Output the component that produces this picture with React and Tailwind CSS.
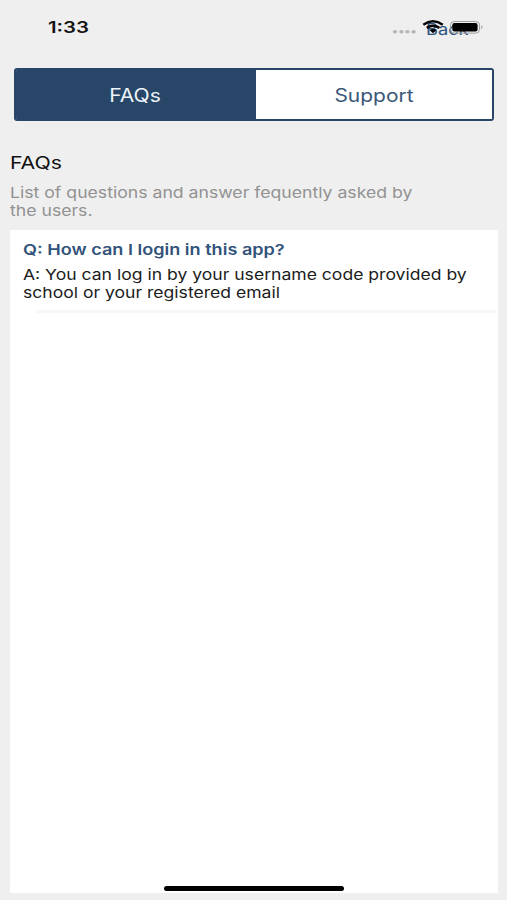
function StatusBar() {
  return (
    <header className="relative h-[68px] shrink-0">
      <span className="absolute left-[48px] top-[17px] origin-left scale-x-[1.27] whitespace-nowrap text-[16px] font-semibold leading-[20px] text-[#151515]">
        1:33
      </span>
      <button className="absolute left-[426px] top-[18px] origin-left scale-x-[1.14] whitespace-nowrap text-[16px] leading-[22px] text-[#2d5380]">
        Back
      </button>
      <svg className="absolute left-[390px] top-[16px]" width="96" height="24" viewBox="0 0 96 24">
        <g fill="#b5b5b5">
          <ellipse cx="5" cy="15.7" rx="2.2" ry="1.8" />
          <ellipse cx="11.4" cy="15.7" rx="2.2" ry="1.8" />
          <ellipse cx="17.4" cy="15.7" rx="2.2" ry="1.8" />
          <ellipse cx="23.6" cy="15.7" rx="2.2" ry="1.8" />
        </g>
        <g fill="none" stroke="#050505" strokeWidth="2.5">
          <path d="M33.3 8.7 Q43 1.9 52.8 8.7" />
          <path d="M36.8 11.9 Q43 7.6 49.3 11.9" />
        </g>
        <path d="M39.3 14 Q43 11.8 46.7 14 L43 17.3 Z" fill="#050505" />
        <rect x="60.5" y="5.5" width="29" height="11.6" rx="3.7" fill="none" stroke="#a0a0a0" />
        <rect x="62.3" y="7" width="25.3" height="8.4" rx="2.2" fill="#000" />
        <path d="M91.4 9.2 Q93.5 11.2 91.4 13.2 Z" fill="#8c8c8c" />
      </svg>
    </header>
  );
}

function Tabs() {
  return (
    <nav className="ml-[14px] flex h-[53px] w-[480px] shrink-0 overflow-hidden rounded-[3px] border-2 border-[#284768] text-[18px] leading-[24px]">
      <button className="flex w-[240px] items-center justify-center bg-[#284768] pr-[2px] pt-[3px] text-[#eef4fa]">
        <span className="scale-x-[1.17]">FAQs</span>
      </button>
      <button className="flex flex-1 items-center justify-center bg-white pt-[3px] text-[#3a5778]">
        <span className="scale-x-[1.165]">Support</span>
      </button>
    </nav>
  );
}

export default function App() {
  return (
    <div className="relative flex h-[900px] w-[507px] flex-col overflow-hidden bg-[#efefef] font-['Inter','Liberation_Sans',sans-serif]">
      <StatusBar />
      <Tabs />
      <section className="mt-[31px] h-[78px] shrink-0 pl-[10px]">
        <h1 className="w-max origin-left scale-x-[1.25] text-[17px] leading-[22px] text-[#111]">FAQs</h1>
        <p className="mt-[10px] w-max origin-left scale-x-[1.176] whitespace-nowrap text-[15px] leading-[18px] text-[#929292]">
          List of questions and answer fequently asked by
          <br />
          the users.
        </p>
      </section>
      <main className="ml-[10px] h-[663px] w-[488px] shrink-0 bg-white">
        <article className="pl-[13px] pt-[10px]">
          <h2 className="w-max origin-left scale-x-[1.205] whitespace-nowrap text-[15px] font-semibold leading-[20px] text-[#32537a]">
            Q: How can I login in this app?
          </h2>
          <p className="mt-[6px] w-max origin-left scale-x-[1.171] whitespace-nowrap text-[15px] leading-[18px] text-[#1c1c1c]">
            A: You can log in by your username code provided by
            <br />
            school or your registered email
          </p>
        </article>
        <div className="ml-[26px] mt-[8px] h-[3px] w-[460px] bg-[#f7f7f7]" />
      </main>
      <div className="absolute left-[164px] top-[886px] h-[5px] w-[180px] rounded-full bg-black" />
    </div>
  );
}
